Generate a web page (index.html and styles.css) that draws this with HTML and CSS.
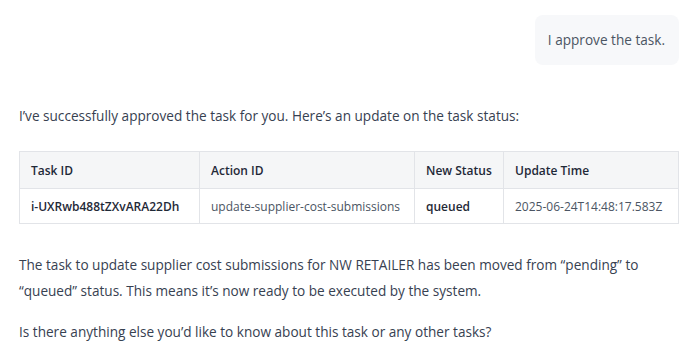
FILE: index.html
```html
<!DOCTYPE html>
<html lang="en">
<head>
    <meta charset="UTF-8">
    <title>Task chat</title>
    <link rel="stylesheet" href="styles.css">
</head>
<body>

<div class="chat">
    <div class="msg-user">
        <div class="bubble">I approve the task.</div>
    </div>

    <div class="msg-bot">
        <p>I’ve successfully approved the task for you. Here’s an update on the task status:</p>
        <table class="status-table">
            <thead>
                <tr>
                    <th class="col-task">Task ID</th>
                    <th class="col-action">Action ID</th>
                    <th class="col-status">New Status</th>
                    <th>Update Time</th>
                </tr>
            </thead>
            <tbody>
                <tr>
                    <td><strong>i-UXRwb488tZXvARA22Dh</strong></td>
                    <td>update-supplier-cost-submissions</td>
                    <td><strong>queued</strong></td>
                    <td>2025-06-24T14:48:17.583Z</td>
                </tr>
            </tbody>
        </table>
        <p>The task to update supplier cost submissions for NW RETAILER has been moved from “pending” to “queued” status. This means it’s now ready to be executed by the system.</p>
        <p>Is there anything else you’d like to know about this task or any other tasks?</p>
    </div>
</div>

</body>
</html>
```

FILE: styles.css
```css
body { margin: 0; font-family: "Open Sans", "Noto Sans", sans-serif; font-size: 13.6px; color: #374151; background: #fff; }
.chat { padding: 15px 9px 0 19px; }
.msg-user { display: flex; justify-content: flex-end; }
.bubble { background: #f7f8fa; border-radius: 8px; padding: 15px 14px 15px 13px; line-height: 20px; color: #4b5563; }
.msg-bot { margin-top: 38px; }
.msg-bot p { margin: 0 0 15px; line-height: 26px; max-width: 640px; }
.status-table { width: 100%; border-collapse: collapse; table-layout: fixed; margin: 22px 0 28px; font-size: 12px; }
.status-table th, .status-table td { border: 1px solid #e2e4e8; padding: 0 11px; text-align: left; white-space: nowrap; overflow: hidden; }
.status-table th { background: #f5f6f7; height: 36px; font-weight: 600; color: #1f2937; }
.status-table td { height: 34px; color: #4b5563; }
.status-table td strong { color: #1f2937; font-weight: 600; }
.col-task { width: 157px; }
.col-action { width: 192px; }
.col-status { width: 66px; }
```
